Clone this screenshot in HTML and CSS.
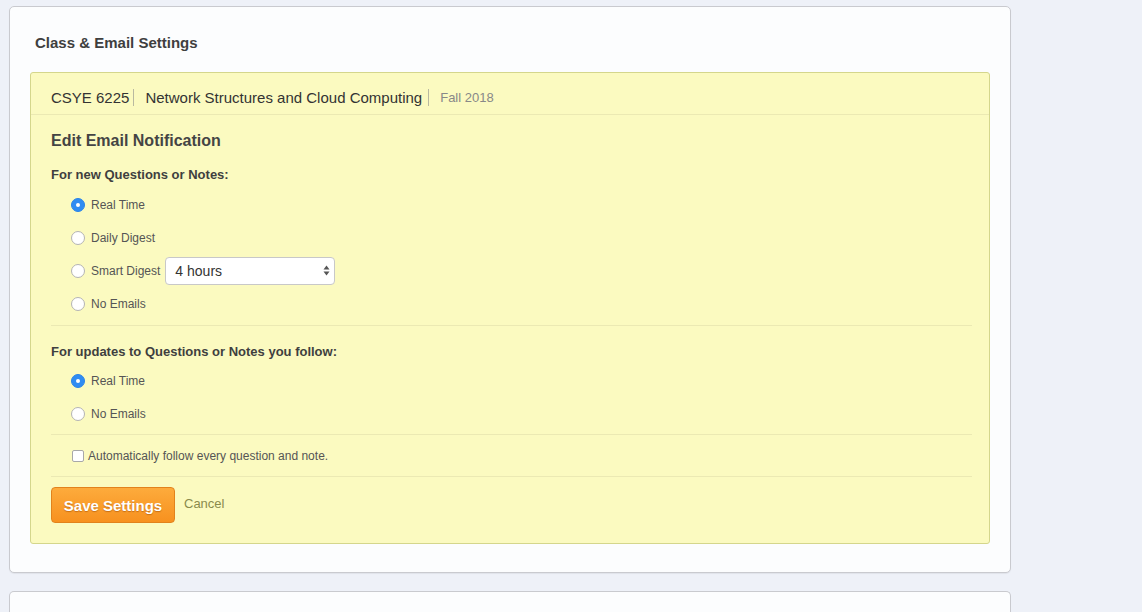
FILE: index.html
```html
<!DOCTYPE html>
<html>
<head>
<meta charset="utf-8">
<link rel="stylesheet" href="styles.css">
</head>
<body>
<div class="page">
  <section class="card">
    <h2 class="card-title">Class &amp; Email Settings</h2>
    <div class="panel">
      <div class="panel-head">
        <span class="course-num">CSYE 6225</span>
        <span class="course-name">Network Structures and Cloud Computing</span>
        <span class="term">Fall 2018</span>
      </div>
      <div class="panel-body">
        <h3 class="edit-title">Edit Email Notification</h3>
        <div class="group">
          <div class="group-label">For new Questions or Notes:</div>
          <div class="options">
            <label class="opt"><span class="radio checked"></span><span>Real Time</span></label>
            <label class="opt"><span class="radio"></span><span>Daily Digest</span></label>
            <label class="opt"><span class="radio"></span><span>Smart Digest</span>
              <span class="select">4 hours
                <svg class="arrows" width="7" height="11" viewBox="0 0 7 11"><path d="M3.5 0.5 L6.5 4.5 L0.5 4.5 Z M3.5 10.5 L6.5 6.5 L0.5 6.5 Z" fill="#555"/></svg>
              </span>
            </label>
            <label class="opt"><span class="radio"></span><span>No Emails</span></label>
          </div>
        </div>
        <div class="group second">
          <div class="group-label">For updates to Questions or Notes you follow:</div>
          <div class="options">
            <label class="opt"><span class="radio checked"></span><span>Real Time</span></label>
            <label class="opt"><span class="radio"></span><span>No Emails</span></label>
          </div>
        </div>
        <div class="check-row">
          <span class="checkbox"></span><span>Automatically follow every question and note.</span>
        </div>
        <div class="actions">
          <button class="btn-save">Save Settings</button>
          <a class="cancel">Cancel</a>
        </div>
      </div>
    </div>
  </section>
  <section class="card card-next"></section>
</div>
</body>
</html>
```

FILE: styles.css
```css
* { box-sizing: border-box; }
html, body { margin: 0; padding: 0; }
body {
  background: #eef1f8;
  font-family: "Liberation Sans", Arial, sans-serif;
  color: #444;
  width: 1142px;
  height: 612px;
  overflow: hidden;
}
.page {
  padding: 6px 0 0 9px;
  display: flex;
  flex-direction: column;
  gap: 18px;
}
.card {
  width: 1002px;
  background: #fcfdfe;
  border: 1px solid #c9cacf;
  border-radius: 5px;
  padding: 0 20px 28px 20px;
  box-shadow: 0 1px 1px rgba(0,0,0,0.06);
}
.card-next { height: 21px; padding: 0; border-bottom: none; border-radius: 5px 5px 0 0; box-shadow: none; }
.card-title {
  margin: 0;
  font-size: 15px;
  font-weight: bold;
  color: #3f3f3f;
  height: 65px;
  line-height: 18px;
  padding: 27px 0 0 5px;
}
.panel {
  background: #fbfac0;
  border: 1px solid #d4d68c;
  border-radius: 3px;
}
.panel-head {
  height: 42px;
  border-bottom: 1px solid #ebe9b3;
  display: flex;
  align-items: center;
  padding: 7px 0 0 20px;
  font-size: 15px;
  color: #333;
}
.course-num, .course-name {
  border-right: 1px solid #b9b9a0;
  line-height: 17px;
  padding-right: 6px;
  margin-right: 11px;
}
.course-num { padding-right: 4px; }
.term { font-size: 13px; color: #888; }
.panel-body { padding: 0 17px 20px 20px; }
.edit-title {
  margin: 0;
  font-size: 16px;
  font-weight: bold;
  color: #444;
  padding-top: 17px;
  line-height: 18px;
}
.group-label {
  font-size: 13px;
  font-weight: bold;
  color: #3f3f3f;
  line-height: 16px;
  margin-top: 17px;
}
.options {
  display: flex;
  flex-direction: column;
  padding: 5px 0 5px 20px;
}
.opt {
  display: flex;
  align-items: center;
  height: 33px;
  font-size: 12px;
  color: #555;
}
.radio {
  width: 14px;
  height: 14px;
  border-radius: 50%;
  border: 1px solid #b4b4b4;
  background: #fff;
  margin-right: 6px;
  display: flex;
  align-items: center;
  justify-content: center;
  flex: none;
}
.radio.checked {
  background: #2f8cf2;
  border-color: #2a84e8;
}
.radio.checked::after {
  content: "";
  width: 4px;
  height: 4px;
  border-radius: 50%;
  background: #fff;
}
.select {
  margin-left: 5px;
  width: 170px;
  height: 28px;
  background: #fff;
  border: 1px solid #c8c8c8;
  border-radius: 4px;
  display: flex;
  align-items: center;
  justify-content: space-between;
  padding: 0 4px 0 9px;
  font-size: 14px;
  color: #333;
}
.group { border-bottom: 1px solid #ebe9b3; }
.group.second .group-label { margin-top: 18px; }
.group.second .options { padding-top: 4px; padding-bottom: 4px; }
.check-row {
  height: 42px;
  display: flex;
  align-items: center;
  padding-left: 21px;
  font-size: 12px;
  color: #555;
  border-bottom: 1px solid #ebe9b3;
}
.checkbox {
  width: 12px;
  height: 12px;
  border: 1px solid #a8a8a8;
  border-radius: 2px;
  background: #fff;
  margin-right: 4px;
}
.actions {
  display: flex;
  align-items: center;
  padding-top: 10px;
}
.btn-save {
  width: 124px;
  height: 36px;
  border: 1px solid #e2821c;
  border-radius: 4px;
  background: linear-gradient(#fdab3c, #f7911f);
  color: #fff;
  font-family: "Liberation Sans", Arial, sans-serif;
  font-size: 15px;
  font-weight: bold;
  text-shadow: 0 1px 1px rgba(150,70,0,0.5);
  padding: 0;
}
.cancel {
  font-size: 13px;
  color: #8a8a4c;
  margin-left: 9px;
  margin-top: -4px;
}
```
